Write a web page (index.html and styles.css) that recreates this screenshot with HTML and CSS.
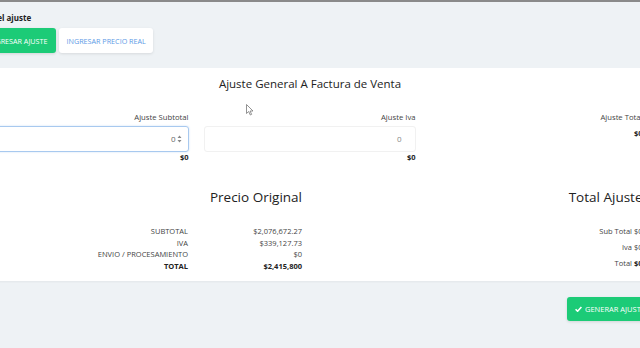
FILE: index.html
```html
<!DOCTYPE html>
<html lang="es">
<head>
	<meta charset="utf-8" />
	<title>Ajuste General</title>
	<link rel="stylesheet" href="styles.css">
</head>
<body>
	<div class="page">

		<div class="mode">
			<div class="mode-label">Tipo del ajuste</div>
			<div class="mode-buttons">
				<button class="btn btn-green">INGRESAR AJUSTE</button>
				<button class="btn btn-white">INGRESAR PRECIO REAL</button>
			</div>
		</div>

		<div class="card">
			<h2 class="card-title">Ajuste General A Factura de Venta</h2>

			<div class="fields">
				<div class="field">
					<label class="field-label">Ajuste Subtotal</label>
					<div class="input input-focus">0<svg class="spin" width="5" height="8" viewBox="0 0 5 8"><path d="M0.5 3 L2.5 0.5 L4.5 3 Z M0.5 5 L2.5 7.5 L4.5 5 Z" fill="#888"/></svg></div>
					<div class="field-sum">$0</div>
				</div>
				<div class="field">
					<label class="field-label">Ajuste Iva</label>
					<div class="input input-plain">0</div>
					<div class="field-sum">$0</div>
				</div>
				<div class="field">
					<label class="field-label">Ajuste Total</label>
					<div class="field-sum field-sum-top">$0</div>
				</div>
			</div>

			<div class="summary">
				<div class="summary-half">
					<h3 class="summary-title">Precio Original</h3>
					<table class="price-table">
						<tr><td>SUBTOTAL</td><td>$2,076,672.27</td></tr>
						<tr><td>IVA</td><td>$339,127.73</td></tr>
						<tr><td>ENVIO / PROCESAMIENTO</td><td>$0</td></tr>
						<tr class="total"><td>TOTAL</td><td>$2,415,800</td></tr>
					</table>
				</div>
				<div class="summary-half">
					<h3 class="summary-title">Total Ajuste</h3>
					<div class="adj-line">Sub Total $0</div>
					<div class="adj-line">Iva $0</div>
					<div class="adj-line">Total <b>$0</b></div>
				</div>
			</div>
		</div>

		<div class="actions">
			<button class="btn btn-green btn-submit"><svg class="check" width="7" height="6" viewBox="0 0 7 6"><path d="M0.6 3.2 L2.6 5.2 L6.4 1" fill="none" stroke="#fff" stroke-width="1.6"/></svg>GENERAR AJUSTE</button>
		</div>
	</div>

	<svg class="cursor" width="8" height="12" viewBox="0 0 8 12"><path d="M0.5 0.5 L0.5 9.5 L2.7 7.5 L4.3 11 L5.6 10.4 L4.1 7 L7 7 Z" fill="#fff" stroke="#777" stroke-width="0.8"/></svg>
</body>
</html>
```

FILE: styles.css
```css
body {
	margin: 0;
	background-color: #eef2f5;
	border-top: 2px solid #8a8a8a;
	font-family: 'Open Sans', 'Noto Sans', Arial, sans-serif;
	color: #333;
	overflow: hidden;
	height: 346px;
}

.page {
	margin-left: -41px;
	width: 702px;
}

/* Mode selector */

.mode {
	padding: 10px 0 0 14px;
}

.mode-label {
	font-size: 8px;
	font-weight: 700;
	line-height: 12px;
	color: #222;
}

.mode-buttons {
	display: flex;
	gap: 3px;
	margin-top: 4px;
	margin-left: 5px;
}

.btn {
	font-family: inherit;
	font-size: 7.2px;
	height: 25px;
	padding: 0 7px;
	border: 0;
	border-radius: 3px;
	cursor: pointer;
}

.btn-green {
	background-color: #1ccb77;
	color: #fff;
	box-shadow: 0 1px 3px rgba(0, 0, 0, 0.12);
}

.mode-buttons .btn-green {
	padding: 0 9px 0 10px;
}

.btn-white {
	background-color: #fff;
	color: #5d9ae6;
	box-shadow: 0 1px 3px rgba(0, 0, 0, 0.1);
}

/* Card */

.card {
	margin-top: 15px;
	background-color: #fff;
	padding: 0 10px 8px 10px;
	box-shadow: 0 1px 2px rgba(0, 0, 0, 0.05);
}

.card-title {
	margin: 0;
	padding-top: 8px;
	font-size: 11.5px;
	font-weight: 500;
	line-height: 16px;
	text-align: center;
	color: #222;
}

.fields {
	display: flex;
	margin-top: 19px;
}

.field {
	width: 227px;
	padding: 0 7.5px;
	box-sizing: border-box;
	text-align: right;
}

.field-label {
	display: block;
	font-size: 7.7px;
	line-height: 12px;
	color: #444;
}

.input {
	margin-top: 3px;
	height: 26px;
	box-sizing: border-box;
	border-radius: 3px;
	font-size: 8px;
	line-height: 24px;
	padding-right: 10px;
	color: #888;
}

.input-focus {
	border: 1px solid #a8c9ef;
	box-shadow: 0 0 2px rgba(120, 170, 230, 0.4);
	padding-right: 6px;
	color: #666;
}

.input-plain {
	border: 1px solid #f1f1f1;
	padding-right: 13px;
}

.spin {
	vertical-align: -1px;
	margin-left: 1px;
}

.field-sum {
	font-size: 7.5px;
	font-weight: 700;
	line-height: 10px;
	color: #222;
}

.field-sum-top {
	margin-top: 5px;
}

/* Summary */

.summary {
	display: flex;
	margin-top: 25px;
	align-items: flex-start;
}

.summary-half {
	width: 340.5px;
	padding: 0 7.5px;
	box-sizing: border-box;
	text-align: right;
}

.summary-title {
	margin: 0;
	font-size: 13.5px;
	font-weight: 500;
	line-height: 20px;
	color: #222;
}

.price-table {
	margin: 19px 0 0 auto;
	border-collapse: collapse;
	font-size: 7.5px;
	color: #444;
}

.price-table td {
	padding: 0;
	height: 11.7px;
	line-height: 11.7px;
	text-align: right;
}

.price-table td:last-child {
	width: 114px;
}

.price-table .total td {
	font-weight: 700;
	color: #222;
}

.adj-line {
	font-size: 7.5px;
	line-height: 16px;
	color: #444;
}

.adj-line:first-of-type {
	margin-top: 16px;
}

.adj-line b {
	color: #222;
}

/* Actions */

.actions {
	display: flex;
	justify-content: flex-end;
	margin-top: 16px;
	padding-right: 8px;
}

.btn-submit {
	height: 24px;
	padding: 0 8px;
	font-size: 7.5px;
}

.check {
	margin-right: 3px;
	vertical-align: 0;
}

.cursor {
	position: absolute;
	left: 246px;
	top: 104px;
}
```
